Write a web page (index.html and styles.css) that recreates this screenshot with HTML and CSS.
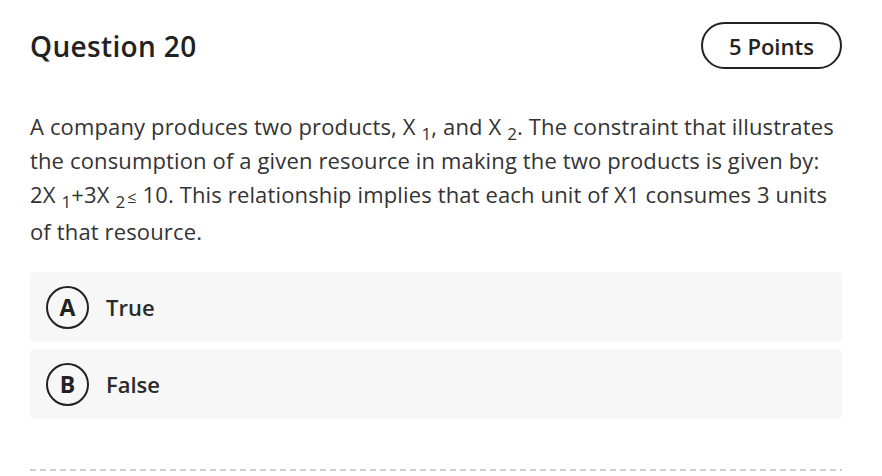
FILE: index.html
```html
<!DOCTYPE html>
<html>
<head>
<meta charset="utf-8">
<link rel="stylesheet" href="styles.css">
</head>
<body>
<div class="card">
  <div class="header">
    <h1 class="title">Question 20</h1>
    <div class="points">5 Points</div>
  </div>
  <p class="question">A company produces two products, X <sub>1</sub>, and X <sub>2</sub>. The constraint that illustrates the consumption of a given resource in making the two products is given by: <span class="nw">2X <sub>1</sub>+3X <sub>2</sub><span class="le">≤</span></span> 10. This relationship implies that each unit of X1 consumes 3 units of that resource.</p>
  <div class="options">
    <div class="option"><span class="letter">A</span><span class="label">True</span></div>
    <div class="option"><span class="letter">B</span><span class="label">False</span></div>
  </div>
  <div class="divider"></div>
</div>
</body>
</html>
```
FILE: styles.css
```css
html, body {
  margin: 0;
  padding: 0;
  background: #fff;
}
body {
  font-family: "Open Sans", "Liberation Sans", sans-serif;
  color: #2b2b2b;
}
.card {
  padding: 22px 40px 0 30px;
}
.header {
  display: flex;
  justify-content: space-between;
  align-items: center;
  height: 47px;
}
.title {
  margin: 0;
  font-size: 28px;
  font-weight: 600;
  letter-spacing: 0.35px;
  color: #222;
  line-height: 1;
}
.points {
  box-sizing: border-box;
  height: 47px;
  width: 141px;
  border: 2px solid #222;
  border-radius: 24px;
  display: flex;
  align-items: center;
  justify-content: center;
  font-size: 22px;
  font-weight: 600;
  color: #222;
}
.question {
  margin: 40px 0 0;
  font-size: 22px;
  line-height: 34px;
  letter-spacing: 0.14px;
  color: #333;
}
.nw {
  white-space: nowrap;
}
.question sub {
  font-size: 17px;
  vertical-align: -5px;
  line-height: 0;
}
.le {
  font-size: 16px;
  margin-left: 2px;
}
.options {
  margin-top: 24px;
  display: flex;
  flex-direction: column;
  gap: 7px;
}
.option {
  height: 70px;
  background: #f7f7f7;
  border-radius: 4px;
  display: flex;
  align-items: center;
  padding-left: 16px;
}
.letter {
  box-sizing: border-box;
  width: 43px;
  height: 43px;
  border: 2px solid #222;
  border-radius: 50%;
  display: flex;
  align-items: center;
  justify-content: center;
  font-size: 23px;
  font-weight: 700;
  color: #222;
}
.label {
  margin-left: 17px;
  font-size: 22px;
  font-weight: 600;
  color: #2b2b2b;
}
.divider {
  margin-top: 50px;
  height: 2px;
  background: repeating-linear-gradient(to right, #cfcfcf 0 6px, transparent 6px 10px);
}
```
